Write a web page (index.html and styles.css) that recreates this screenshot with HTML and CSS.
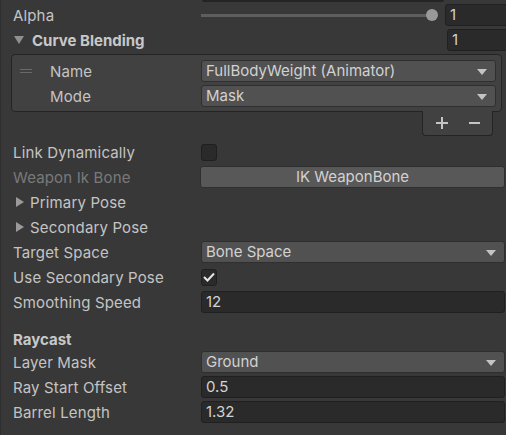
FILE: index.html
```html
<!DOCTYPE html>
<html>
<head>
<meta charset="utf-8">
<link rel="stylesheet" href="styles.css">
</head>
<body>
<div class="inspector">
  <div class="prev-edge"></div>

  <div class="row r-alpha">
    <div class="label">Alpha</div>
    <div class="slider">
      <div class="track"></div>
      <div class="thumb"></div>
    </div>
    <div class="numfield">1</div>
  </div>

  <div class="row">
    <div class="label bold fold">
      <svg class="tri-down" width="10" height="8" viewBox="0 0 10 8"><path d="M0 0 H10 L5 8 Z"/></svg>
      Curve Blending
    </div>
    <div class="spacer"></div>
    <div class="numfield nf2">1</div>
  </div>

  <div class="listbox">
    <div class="row lrow">
      <div class="handle"><span></span><span></span></div>
      <div class="llabel">Name</div>
      <div class="dropdown in-list">FullBodyWeight (Animator)<i class="arrow"></i></div>
    </div>
    <div class="row lrow">
      <div class="handle blank"></div>
      <div class="llabel">Mode</div>
      <div class="dropdown in-list">Mask<i class="arrow"></i></div>
    </div>
  </div>
  <div class="listfoot">
    <svg width="12" height="12" viewBox="0 0 12 12"><path d="M6 0 V12 M0 6 H12" stroke="#c4c4c4" stroke-width="2"/></svg>
    <svg width="11" height="12" viewBox="0 0 11 12"><path d="M0 6 H11" stroke="#c4c4c4" stroke-width="2"/></svg>
  </div>

  <div class="row r-link">
    <div class="label">Link Dynamically</div>
    <div class="checkbox"></div>
  </div>

  <div class="row">
    <div class="label disabled">Weapon Ik Bone</div>
    <div class="button">IK WeaponBone</div>
  </div>

  <div class="row">
    <div class="label fold2">
      <svg class="tri-right" width="8" height="10" viewBox="0 0 8 10"><path d="M0 0 L8 5 L0 10 Z"/></svg>
      Primary Pose
    </div>
  </div>

  <div class="row">
    <div class="label fold2">
      <svg class="tri-right" width="8" height="10" viewBox="0 0 8 10"><path d="M0 0 L8 5 L0 10 Z"/></svg>
      Secondary Pose
    </div>
  </div>

  <div class="row">
    <div class="label">Target Space</div>
    <div class="dropdown">Bone Space<i class="arrow"></i></div>
  </div>

  <div class="row">
    <div class="label">Use Secondary Pose</div>
    <div class="checkbox checked">
      <svg width="12" height="10" viewBox="0 0 12 10"><path d="M1 5 L4.5 8.5 L11 1.5" fill="none" stroke="#e6e6e6" stroke-width="2"/></svg>
    </div>
  </div>

  <div class="row">
    <div class="label">Smoothing Speed</div>
    <div class="field">12</div>
  </div>

  <div class="row r-header">
    <div class="label bold">Raycast</div>
  </div>

  <div class="row">
    <div class="label">Layer Mask</div>
    <div class="dropdown">Ground<i class="arrow"></i></div>
  </div>

  <div class="row">
    <div class="label">Ray Start Offset</div>
    <div class="field">0.5</div>
  </div>

  <div class="row">
    <div class="label">Barrel Length</div>
    <div class="field">1.32</div>
  </div>
</div>
</body>
</html>
```

FILE: styles.css
```css
* { box-sizing: border-box; }
html, body {
  margin: 0;
  padding: 0;
  background: #383838;
  width: 506px;
  height: 435px;
  overflow: hidden;
}
.inspector {
  font-family: Inter, "Noto Sans", sans-serif;
  font-size: 15px;
  color: #c4c4c4;
  border-left: 1px solid #2e2e2e;
  height: 435px;
}
.prev-edge {
  height: 2px;
  margin-left: 201px;
  width: 242px;
  background: #242424;
  border-radius: 0 0 3px 3px;
  margin-bottom: 2px;
}
.row {
  display: flex;
  align-items: center;
  height: 22px;
  margin-bottom: 3px;
}
.label {
  flex: 0 0 200px;
  padding-left: 12px;
  white-space: nowrap;
  display: flex;
  align-items: center;
  letter-spacing: 0.15px;
}
.bold { font-weight: 700; color: #c8c8c8; letter-spacing: 0; }
.disabled { color: #7a7a7a; }
.fold svg { margin-left: 1px; margin-right: 8px; fill: #8f8f8f; }
.fold2 svg { margin-left: 3px; margin-right: 6px; fill: #9a9a9a; }
.spacer { flex: 1; }

.slider {
  flex: 1;
  position: relative;
  height: 22px;
  margin-right: 7px;
}
.track {
  position: absolute;
  left: 0;
  right: 6px;
  top: 10px;
  height: 3px;
  background: #5e5e5e;
}
.thumb {
  position: absolute;
  right: 0;
  top: 5px;
  width: 12px;
  height: 12px;
  border-radius: 50%;
  background: #999999;
}
.numfield {
  flex: 0 0 63px;
  height: 22px;
  background: #2a2a2a;
  border: 1px solid #202020;
  border-radius: 3px;
  padding-left: 4px;
  line-height: 20px;
  color: #d2d2d2;
  margin-right: -2px;
}
.nf2 { flex-basis: 61px; }

.field {
  flex: 1;
  height: 22px;
  margin-right: 1px;
  background: #2a2a2a;
  border: 1px solid #202020;
  border-radius: 3px;
  padding-left: 4px;
  line-height: 20px;
  color: #d2d2d2;
}
.dropdown {
  flex: 1;
  position: relative;
  height: 22px;
  margin-right: 1px;
  background: #515151;
  border: 1px solid #2f2f2f;
  border-radius: 3px;
  padding-left: 4px;
  line-height: 20px;
  color: #d2d2d2;
}
.arrow {
  position: absolute;
  right: 8px;
  top: 8px;
  width: 0;
  height: 0;
  border-left: 5px solid transparent;
  border-right: 5px solid transparent;
  border-top: 6px solid #c4c4c4;
}
.button {
  flex: 1;
  height: 22px;
  margin-right: 1px;
  margin-left: -1px;
  background: #585858;
  border: 1px solid #2f2f2f;
  border-radius: 3px;
  text-align: center;
  line-height: 20px;
  color: #d2d2d2;
}
.checkbox {
  width: 16px;
  height: 17px;
  background: #2a2a2a;
  border: 1px solid #1f1f1f;
  border-radius: 3px;
  display: flex;
  align-items: center;
  justify-content: center;
}

.listbox {
  margin: 2px 4px 0 10px;
  background: #414141;
  border: 1px solid #242424;
  border-radius: 4px;
  padding: 5px 4px 1px 0;
}
.lrow { margin-bottom: 3px; }
.handle {
  flex: 0 0 38px;
  padding-left: 8px;
  display: flex;
  flex-direction: column;
  gap: 2px;
}
.handle span {
  display: block;
  width: 12px;
  height: 1px;
  background: #6a6a6a;
}
.llabel {
  flex: 0 0 151px;
  letter-spacing: 0.15px;
}
.listfoot {
  margin: -1px 13px 0 auto;
  width: 71px;
  height: 25px;
  background: #414141;
  border: 1px solid #242424;
  border-top: none;
  border-radius: 0 0 4px 4px;
  display: flex;
  align-items: center;
  justify-content: center;
  gap: 21px;
  padding-bottom: 1px;
}
.r-link { margin-top: 5px; }
.r-header { margin-top: 15px; margin-bottom: 1px; }
```
